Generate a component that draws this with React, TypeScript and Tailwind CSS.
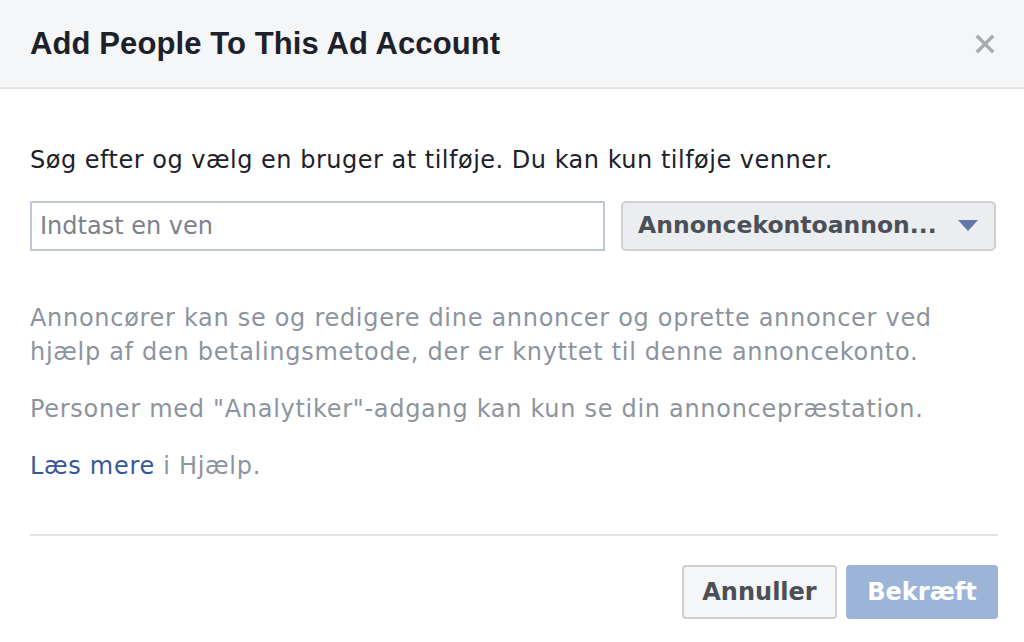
export default function App() {
  return (
    <div className="w-[1024px] h-[642px] bg-white font-['DejaVu_Sans',sans-serif] flex flex-col overflow-hidden">
      <header className="h-[89px] shrink-0 bg-[#f5f6f7] border-b-2 border-[#e5e5e5] flex items-center justify-between pl-[30px] pr-[27px]">
        <h1 className="font-['Liberation_Sans',Arial,sans-serif] text-[31px] font-bold text-[#1d2129] tracking-[0.1px] pt-[2px]">
          Add People To This Ad Account
        </h1>
        <button className="w-[24px] h-[24px] flex items-center justify-center">
          <svg viewBox="0 0 20 20" className="w-[20px] h-[20px]">
            <path d="M3 3 L17 17 M17 3 L3 17" stroke="#a9abaf" strokeWidth="3.4" strokeLinecap="square" />
          </svg>
        </button>
      </header>

      <main className="flex-1 flex flex-col pl-[30px] pr-[26px] pt-[56px]">
        <p className="text-[24px] text-[#1d2129] leading-[30px] tracking-[0.5px]">
          Søg efter og vælg en bruger at tilføje. Du kan kun tilføje venner.
        </p>

        <div className="flex gap-[16px] mt-[26px] pr-[2px]">
          <input
            className="w-[575px] h-[50px] border-2 border-[#bdc7d8] px-[8px] text-[24px] text-[#1d2129] placeholder:text-[#7d828a] outline-none"
            placeholder="Indtast en ven"
          />
          <button className="flex-1 h-[50px] bg-[#ebedf0] border-2 border-[#ced0d4] rounded-[5px] flex items-center justify-between pl-[15px] pr-[16px]">
            <span className="text-[23.5px] font-bold text-[#4b4f56]">Annoncekontoannon...</span>
            <svg viewBox="0 0 20 12" className="w-[20px] h-[12px]">
              <path d="M0 0 L20 0 L10 11 Z" fill="#6077a9" />
            </svg>
          </button>
        </div>

        <div className="mt-[50px] flex flex-col gap-[23px] text-[24px] text-[#8d949e] leading-[34px] tracking-[0.7px]">
          <p>
            Annoncører kan se og redigere dine annoncer og oprette annoncer ved hjælp af den betalingsmetode, der er knyttet til denne annoncekonto.
          </p>
          <p>Personer med "Analytiker"-adgang kan kun se din annoncepræstation.</p>
          <p>
            <a className="text-[#365899]">Læs mere</a> i Hjælp.
          </p>
        </div>

        <div className="mt-[51px] border-t-2 border-[#e0e2e5]" />

        <div className="flex justify-end gap-[9px] mt-[29px]">
          <button className="w-[155px] h-[54px] bg-[#f5f6f7] border-2 border-[#ced0d4] rounded-[4px] text-[24px] font-bold text-[#4b4f56]">
            Annuller
          </button>
          <button className="w-[152px] h-[54px] bg-[#9cb4d8] rounded-[4px] text-[24px] font-bold text-white">
            Bekræft
          </button>
        </div>
      </main>
    </div>
  );
}
